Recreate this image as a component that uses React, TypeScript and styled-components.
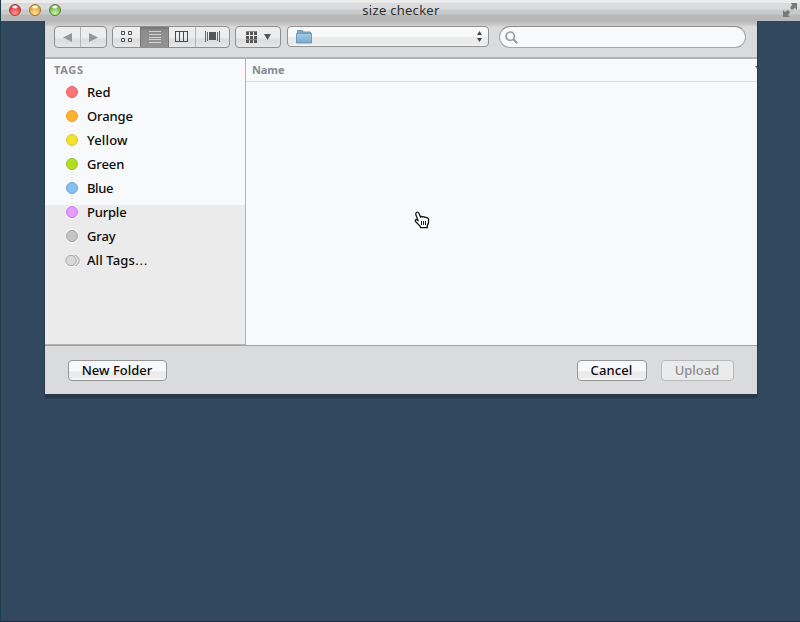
import React from 'react';
import styled, { createGlobalStyle } from 'styled-components';

const GlobalStyle = createGlobalStyle`
  * { box-sizing: border-box; }
  html, body { margin: 0; overflow: hidden; background: #32485e; }
  body { font-family: "Noto Sans", "Open Sans", sans-serif; color: #0a0a0a; }
`;

const Window = styled.main`
  position: relative;
  width: 800px;
  height: 622px;
  background: #32485e;
  border-left: 1px solid #1d3d4b;
  border-bottom: 1px solid #1b2b40;
`;

const TitleBar = styled.header`
  display: grid;
  grid-template-columns: 70px 1fr 70px;
  height: 21px;
  background: linear-gradient(#ebebeb 0 3px, #dadbdc 3px 9px, #c9cacb 10px 14px, #b8b8b8 15px 21px);
`;

const Lights = styled.div`
  display: flex;
  gap: 8px;
  padding: 4px 0 0 8px;
`;

const Light = styled.i<{ $edge: string; $fill: string; $glow: string }>`
  width: 12px;
  height: 12px;
  border-radius: 50%;
  border: 1px solid ${p => p.$edge};
  background:
    radial-gradient(ellipse 3.5px 2px at 50% 20%, #fff 40%, transparent 100%),
    radial-gradient(circle at 50% 85%, ${p => p.$glow}, ${p => p.$fill} 65%);
`;

const Title = styled.h1`
  margin: 0;
  padding-left: 1px;
  text-align: center;
  font-size: 13px;
  line-height: 21px;
  font-weight: 400;
  letter-spacing: 0.28px;
  color: #303030;
`;

const FullScreen = styled.div`
  display: flex;
  justify-content: flex-end;
  padding: 3px 2px 0 0;
`;

const Sheet = styled.section`
  display: flex;
  flex-direction: column;
  width: 712px;
  height: 373px;
  margin-left: 44px;
  background: #dadbdc;
  box-shadow: 0 4px 1px #273849, 0 0 0 1px #2a3d50;
  clip-path: inset(0 -4px -8px -4px);
`;

const Toolbar = styled.div`
  display: flex;
  align-items: flex-start;
  height: 38px;
  padding: 5px 11px 0 9px;
  background: linear-gradient(#b8b8b8 0, #c4c4c5 3px, #dadbdc 6px);
  border-bottom: 2px solid #b3b3b3;
`;

const Segments = styled.div<{ $gap: number }>`
  display: flex;
  height: 22px;
  margin-right: ${p => p.$gap}px;
  border: 1px solid #8f8f8f;
  border-radius: 4px;
  background: linear-gradient(#ededee 0 50%, #dadcdd 65%, #e6e7e8);
  overflow: hidden;
`;

const Segment = styled.button<{ $w: number; $active?: boolean; $line?: boolean }>`
  display: flex;
  align-items: center;
  justify-content: center;
  width: ${p => p.$w}px;
  padding: 0;
  border: 0;
  background: ${p => (p.$active ? 'linear-gradient(#747474 0, #8c8c8c 4px, #949494)' : 'transparent')};
  box-shadow: ${p => (p.$active ? 'inset 1px 0 #777, inset -1px 0 #777' : 'none')};
  border-right: ${p => (p.$line ? '1px solid #b2b3b4' : '0')};
`;

const PathPopup = styled.div`
  display: flex;
  align-items: center;
  justify-content: space-between;
  width: 202px;
  height: 21px;
  margin-right: 10px;
  padding: 0 6px 0 7px;
  border: 1px solid #929292;
  border-radius: 4px;
  background: linear-gradient(#f8f9fb 0 50%, #ebebeb 50% 90%, #f8f9fb);
`;

const Search = styled.div`
  display: flex;
  align-items: center;
  width: 247px;
  height: 22px;
  padding-left: 5px;
  border: 1px solid #a7a7a8;
  border-top-color: #8c8c8c;
  border-radius: 11px;
  background: #f8f9fb;
`;

const Content = styled.div`
  display: flex;
  height: 286px;
`;

const Sidebar = styled.nav`
  width: 201px;
  padding-top: 2px;
  background: linear-gradient(#f8f9fb 146px, #ebebeb 146px);
  border-right: 1px solid #b3b3b3;
  border-bottom: 1px solid #b3b3b3;
`;

const TagsHeading = styled.h2`
  margin: 0 0 1px 9px;
  height: 18px;
  font-size: 11px;
  line-height: 17px;
  font-weight: 700;
  letter-spacing: 0.7px;
  color: #8c8c8c;
`;

const Tag = styled.div`
  display: flex;
  align-items: center;
  height: 24px;
  padding-left: 20px;
  font-size: 13px;
  font-weight: 500;
`;

const Dot = styled.i<{ $fill: string; $edge: string; $halo?: boolean }>`
  width: 12px;
  height: 12px;
  margin: 0 9px 0 1px;
  border-radius: 50%;
  background: ${p => p.$fill};
  border: 1px solid ${p => p.$edge};
  box-shadow: 0 0 0 1px ${p => (p.$halo ? '#f5f5f5' : 'transparent')};
`;

const AllTagsIcon = styled.svg`
  margin-right: 7px;
`;

const Label = styled.span<{ $track: number }>`
  letter-spacing: ${p => p.$track}px;
`;

const Ellipsis = styled.span`
  font-family: "DejaVu Sans", sans-serif;
  font-weight: 400;
  line-height: 1;
`;

const Files = styled.div`
  flex: 1;
  background: #f8f9fb;
`;

const Column = styled.div`
  display: flex;
  justify-content: space-between;
  height: 23px;
  padding-left: 6px;
  border-bottom: 1px solid #dcdddd;
  font-size: 11px;
  line-height: 21px;
  font-weight: 700;
  letter-spacing: -0.1px;
  color: #848b92;
`;

const Footer = styled.footer`
  display: flex;
  align-items: flex-start;
  height: 49px;
  padding: 14px 23px 0;
  border-top: 1px solid #a2a2a2;
`;

const PushButton = styled.button<{ $w: number; $track: number; $mr?: string }>`
  width: ${p => p.$w}px;
  height: 21px;
  margin-right: ${p => p.$mr || '0'};
  padding: 0 1px 1px 0;
  border: 1px solid #969696;
  border-radius: 4px;
  background: linear-gradient(#f8f9fb 0 52%, #ebebeb 56% 85%, #f8f9fb);
  font: 500 13px/18px "Noto Sans", sans-serif;
  letter-spacing: ${p => p.$track}px;
  color: #0a0a0a;
  &:disabled {
    color: #8d8d8d;
    border-color: #b9b9b9;
    background: #ebebeb;
  }
`;

const Cursor = styled.svg`
  position: absolute;
  left: 413px;
  top: 211px;
`;

const tags = [
  { name: 'Red', fill: '#fb7476', edge: '#df6568', track: -0.1 },
  { name: 'Orange', fill: '#fdb32f', edge: '#e99f2b', track: -0.1 },
  { name: 'Yellow', fill: '#f4e32d', edge: '#d6c530', track: 0.2 },
  { name: 'Green', fill: '#b0de22', edge: '#97c226', track: -0.1 },
  { name: 'Blue', fill: '#83c2f0', edge: '#68a5d2', track: -0.4 },
  { name: 'Purple', fill: '#e49dfb', edge: '#ce74ed', track: -0.2, halo: true },
  { name: 'Gray', fill: '#c5c5c5', edge: '#a2a2a2', track: -0.1, halo: true },
];

const BackForward = () => (
  <>
    <Segment $w={26} $line aria-label="Back">
      <svg width="9" height="9"><path d="M9 0v9L0 4.5z" fill="#969696" /></svg>
    </Segment>
    <Segment $w={25} aria-label="Forward">
      <svg width="9" height="9"><path d="M0 0v9l9-4.5z" fill="#969696" /></svg>
    </Segment>
  </>
);

const ViewModes = () => (
  <>
    <Segment $w={27} aria-label="Icons">
      <svg width="12" height="12" fill="#f0f0f0" stroke="#4c4c4c">
        <path d="M.5.5h3v3h-3zM7.5.5h3v3h-3zM.5 7.5h3v3h-3zM7.5 7.5h3v3h-3z" />
      </svg>
    </Segment>
    <Segment $w={29} $active aria-label="List">
      <svg width="12" height="12" stroke="#d2d2d2" shapeRendering="crispEdges">
        <path d="M0 .5h12M0 3.5h12M0 6.5h12M0 8.5h12M0 11.5h12" />
      </svg>
    </Segment>
    <Segment $w={27} $line aria-label="Columns">
      <svg width="14" height="12" fill="none" stroke="#4a4a4a" shapeRendering="crispEdges">
        <path d="M.5.5h12v10H.5zM4.5 1v10M8.5 1v10" />
      </svg>
    </Segment>
    <Segment $w={33} aria-label="Cover flow">
      <svg width="15" height="12" shapeRendering="crispEdges">
        <path d="M.5 0v11M2.5 1v9M12.5 1v9M14.5 0v11" stroke="#666" />
        <path d="M4 1h7v8H4z" fill="#555" />
      </svg>
    </Segment>
  </>
);

export default function App() {
  return (
    <>
      <GlobalStyle />
      <Window>
        <TitleBar>
          <Lights>
            <Light $edge="#a53e3c" $fill="#e4403f" $glow="#ff9a96" />
            <Light $edge="#a37231" $fill="#e8a83c" $glow="#ffe39a" />
            <Light $edge="#537f3d" $fill="#79b956" $glow="#d2f3a4" />
          </Lights>
          <Title>size checker</Title>
          <FullScreen>
            <svg width="15" height="15" fill="#7a7a7a">
              <path d="M8 0h6v7l-2-2-3 2-2-2 2-3zM0 7l2 2 3-2 2 2-2 3 2 2H0z" />
            </svg>
          </FullScreen>
        </TitleBar>
        <Sheet>
          <Toolbar>
            <Segments $gap={5}><BackForward /></Segments>
            <Segments $gap={5}><ViewModes /></Segments>
            <Segments $gap={6}>
              <Segment $w={44} aria-label="Arrange">
                <svg width="26" height="12">
                  <path
                    d="M1 1h3v3H1zM5 1h3v3H5zM9 1h3v3H9zM1 5h3v3H1zM5 5h3v3H5zM9 5h3v3H9zM1 9h3v3H1zM5 9h3v3H5zM9 9h3v3H9z"
                    fill="#555"
                  />
                  <path d="M1 .5h11M1 8.5h11" stroke="#8a8a8a" />
                  <path d="M19 3h7l-3.5 6z" fill="#555" />
                </svg>
              </Segment>
            </Segments>
            <PathPopup>
              <svg width="18" height="16">
                <defs>
                  <linearGradient id="folder" x2="0" y2="1">
                    <stop stopColor="#a5cbe5" /><stop offset="1" stopColor="#77a9ce" />
                  </linearGradient>
                </defs>
                <path d="M2.5 1.5h5l1 1.5h7v4h-13z" fill="#80abc9" stroke="#6b98b7" />
                <path d="M1.5 4.5h15v9.5h-15z" fill="url(#folder)" stroke="#6d9bbc" />
              </svg>
              <svg width="5" height="11" fill="#444"><path d="M0 4L2.5 0 5 4zM0 7h5L2.5 11z" /></svg>
            </PathPopup>
            <Search>
              <svg width="13" height="13" fill="none" stroke="#9d9d9e">
                <circle cx="5.2" cy="5.2" r="4.2" strokeWidth="1.7" />
                <path d="M8.3 8.3l4 4" strokeWidth="2" />
              </svg>
            </Search>
          </Toolbar>
          <Content>
            <Sidebar>
              <TagsHeading>TAGS</TagsHeading>
              {tags.map(t => (
                <Tag key={t.name}>
                  <Dot $fill={t.fill} $edge={t.edge} $halo={t.halo} />
                  <Label $track={t.track}>{t.name}</Label>
                </Tag>
              ))}
              <Tag>
                <AllTagsIcon width="15" height="13" fill="#d8d9da" stroke="#a9a9a9">
                  <circle cx="9" cy="6.5" r="6" stroke="#f5f5f5" />
                  <circle cx="9" cy="6.5" r="5.2" />
                  <circle cx="6" cy="6.5" r="6" stroke="#f5f5f5" />
                  <circle cx="6" cy="6.5" r="5.2" />
                </AllTagsIcon>
                <Label $track={0.1}>All Tags<Ellipsis>…</Ellipsis></Label>
              </Tag>
            </Sidebar>
            <Files>
              <Column>
                <span>Name</span>
                <svg width="2" height="22"><path d="M0 7h2v3z" fill="#777" /></svg>
              </Column>
            </Files>
          </Content>
          <Footer>
            <PushButton $w={99} $track={0} $mr="auto">New Folder</PushButton>
            <PushButton $w={70} $track={0.1} $mr="14px">Cancel</PushButton>
            <PushButton $w={73} $track={0} disabled>Upload</PushButton>
          </Footer>
        </Sheet>
        <Cursor width="17" height="19">
          <path
            d="M2.5 1.5q1.5-1 2.5 1L6.5 6q1-1 2 0 1-.8 2 .3 1-.6 2 .4 1.5-.3 2 1.2v4l-1.2 2.5v2.2H6.7L6 15l-4-4Q.5 9 2 8.5l2 .8L1.8 3.5q-.2-1.5.7-2z"
            fill="#fff" stroke="#161616" strokeWidth="1.3"
          />
          <path d="M7.5 10v4M9.5 10v4M11.5 10v4" stroke="#222" />
        </Cursor>
      </Window>
    </>
  );
}
